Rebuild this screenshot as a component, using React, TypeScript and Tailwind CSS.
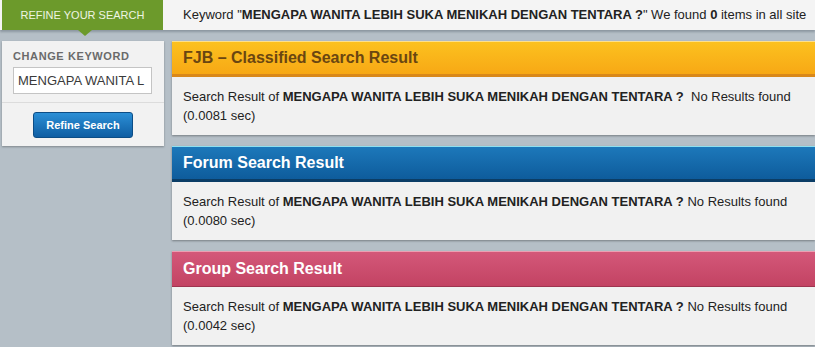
import React from "react";

const keyword = "MENGAPA WANITA LEBIH SUKA MENIKAH DENGAN TENTARA ?";

type Section = {
  title: string;
  time: string;
  head: string;
  titleColor: string;
  extraSpace?: boolean;
};

const sections: Section[] = [
  {
    title: "FJB \u2013 Classified Search Result",
    time: "(0.0081 sec)",
    head: "bg-gradient-to-b from-[#fcc21f] to-[#f7a815] border-b-[3px] border-[#d9881a] shadow-[inset_0_1px_0_#fde08a]",
    titleColor: "text-[#6a4611]",
    extraSpace: true,
  },
  {
    title: "Forum Search Result",
    time: "(0.0080 sec)",
    head: "bg-gradient-to-b from-[#1d79bb] to-[#0e5c9c] border-b-[3px] border-[#0b3d66] shadow-[inset_0_1px_0_#8ee0f0]",
    titleColor: "text-white",
  },
  {
    title: "Group Search Result",
    time: "(0.0042 sec)",
    head: "bg-gradient-to-b from-[#d4587a] to-[#c34363] border-b border-[#9e3550] shadow-[inset_0_1px_0_#ec9fb2]",
    titleColor: "text-white",
  },
];

const ResultCard = ({ s }: { s: Section }) => (
  <div className="bg-[#f1f1f1] shadow-[0_1px_2px_rgba(0,0,0,0.35)]">
    <div className={`h-[36px] flex items-center px-[11px] ${s.head}`}>
      <h2 className={`text-[16px] font-bold ${s.titleColor}`}>{s.title}</h2>
    </div>
    <div className="px-[11px] pt-[10px] pb-[10px] text-[13px] leading-[19px] text-[#222]">
      <div className="whitespace-nowrap">
        Search Result of <b>{keyword}</b>
        {s.extraSpace ? "\u00a0 " : " "}No Results found
      </div>
      <div>{s.time}</div>
    </div>
  </div>
);

const App = () => {
  return (
    <div
      className="w-[815px] h-[347px] overflow-hidden bg-[#b5bfc7]"
      style={{ fontFamily: '"Liberation Sans", Arial, sans-serif' }}
    >
      {/* Top bar */}
      <div className="flex h-[30px] shadow-[0_2px_2px_rgba(90,105,115,0.45)] bg-[#f4f4f4]">
        <div className="relative ml-[2px] w-[161px] bg-[#6c9a2b] flex items-center justify-center">
          <span className="text-[11px] text-[#eef5e2]">REFINE YOUR SEARCH</span>
          <span className="absolute left-[76px] top-full w-0 h-0 border-l-[7px] border-r-[7px] border-t-[6px] border-l-transparent border-r-transparent border-t-[#6c9a2b]" />
        </div>
        <div className="ml-[2px] flex-1 flex items-center pl-[18px] text-[13px] text-[#222] whitespace-nowrap">
          Keyword "<b>{keyword}</b>" We found&nbsp;<b>0</b>&nbsp;items in all site
        </div>
      </div>

      <div className="flex mt-[11px] pl-[2px] gap-[8px]">
        {/* Left panel */}
        <div className="w-[162px] shrink-0 self-start bg-[#f2f2f2] shadow-[0_1px_2px_rgba(0,0,0,0.3)]">
          <div className="px-[11px] pt-[9px] pb-[8px] border-b border-[#dcdcdc]">
            <div className="text-[11px] font-bold tracking-[0.6px] text-[#6a6a6a] leading-[13px]">
              CHANGE KEYWORD
            </div>
            <div className="mt-[4px] h-[27px] w-[139px] bg-white border border-[#c4c4c4] flex items-center px-[4px] overflow-hidden">
              <span className="text-[13px] text-[#3a3a3a] whitespace-nowrap">MENGAPA WANITA L</span>
            </div>
          </div>
          <div className="flex justify-center pt-[9px] pb-[8px]">
            <button className="w-[100px] h-[26px] rounded-[3px] bg-gradient-to-b from-[#2b8fd6] to-[#0f5ea3] border border-[#0c4d86] text-white text-[11px] font-bold">
              Refine Search
            </button>
          </div>
        </div>

        {/* Results */}
        <div className="flex-1 flex flex-col gap-[11px] min-w-0">
          {sections.map((s) => (
            <ResultCard key={s.title} s={s} />
          ))}
        </div>
      </div>
    </div>
  );
};

export default App;
